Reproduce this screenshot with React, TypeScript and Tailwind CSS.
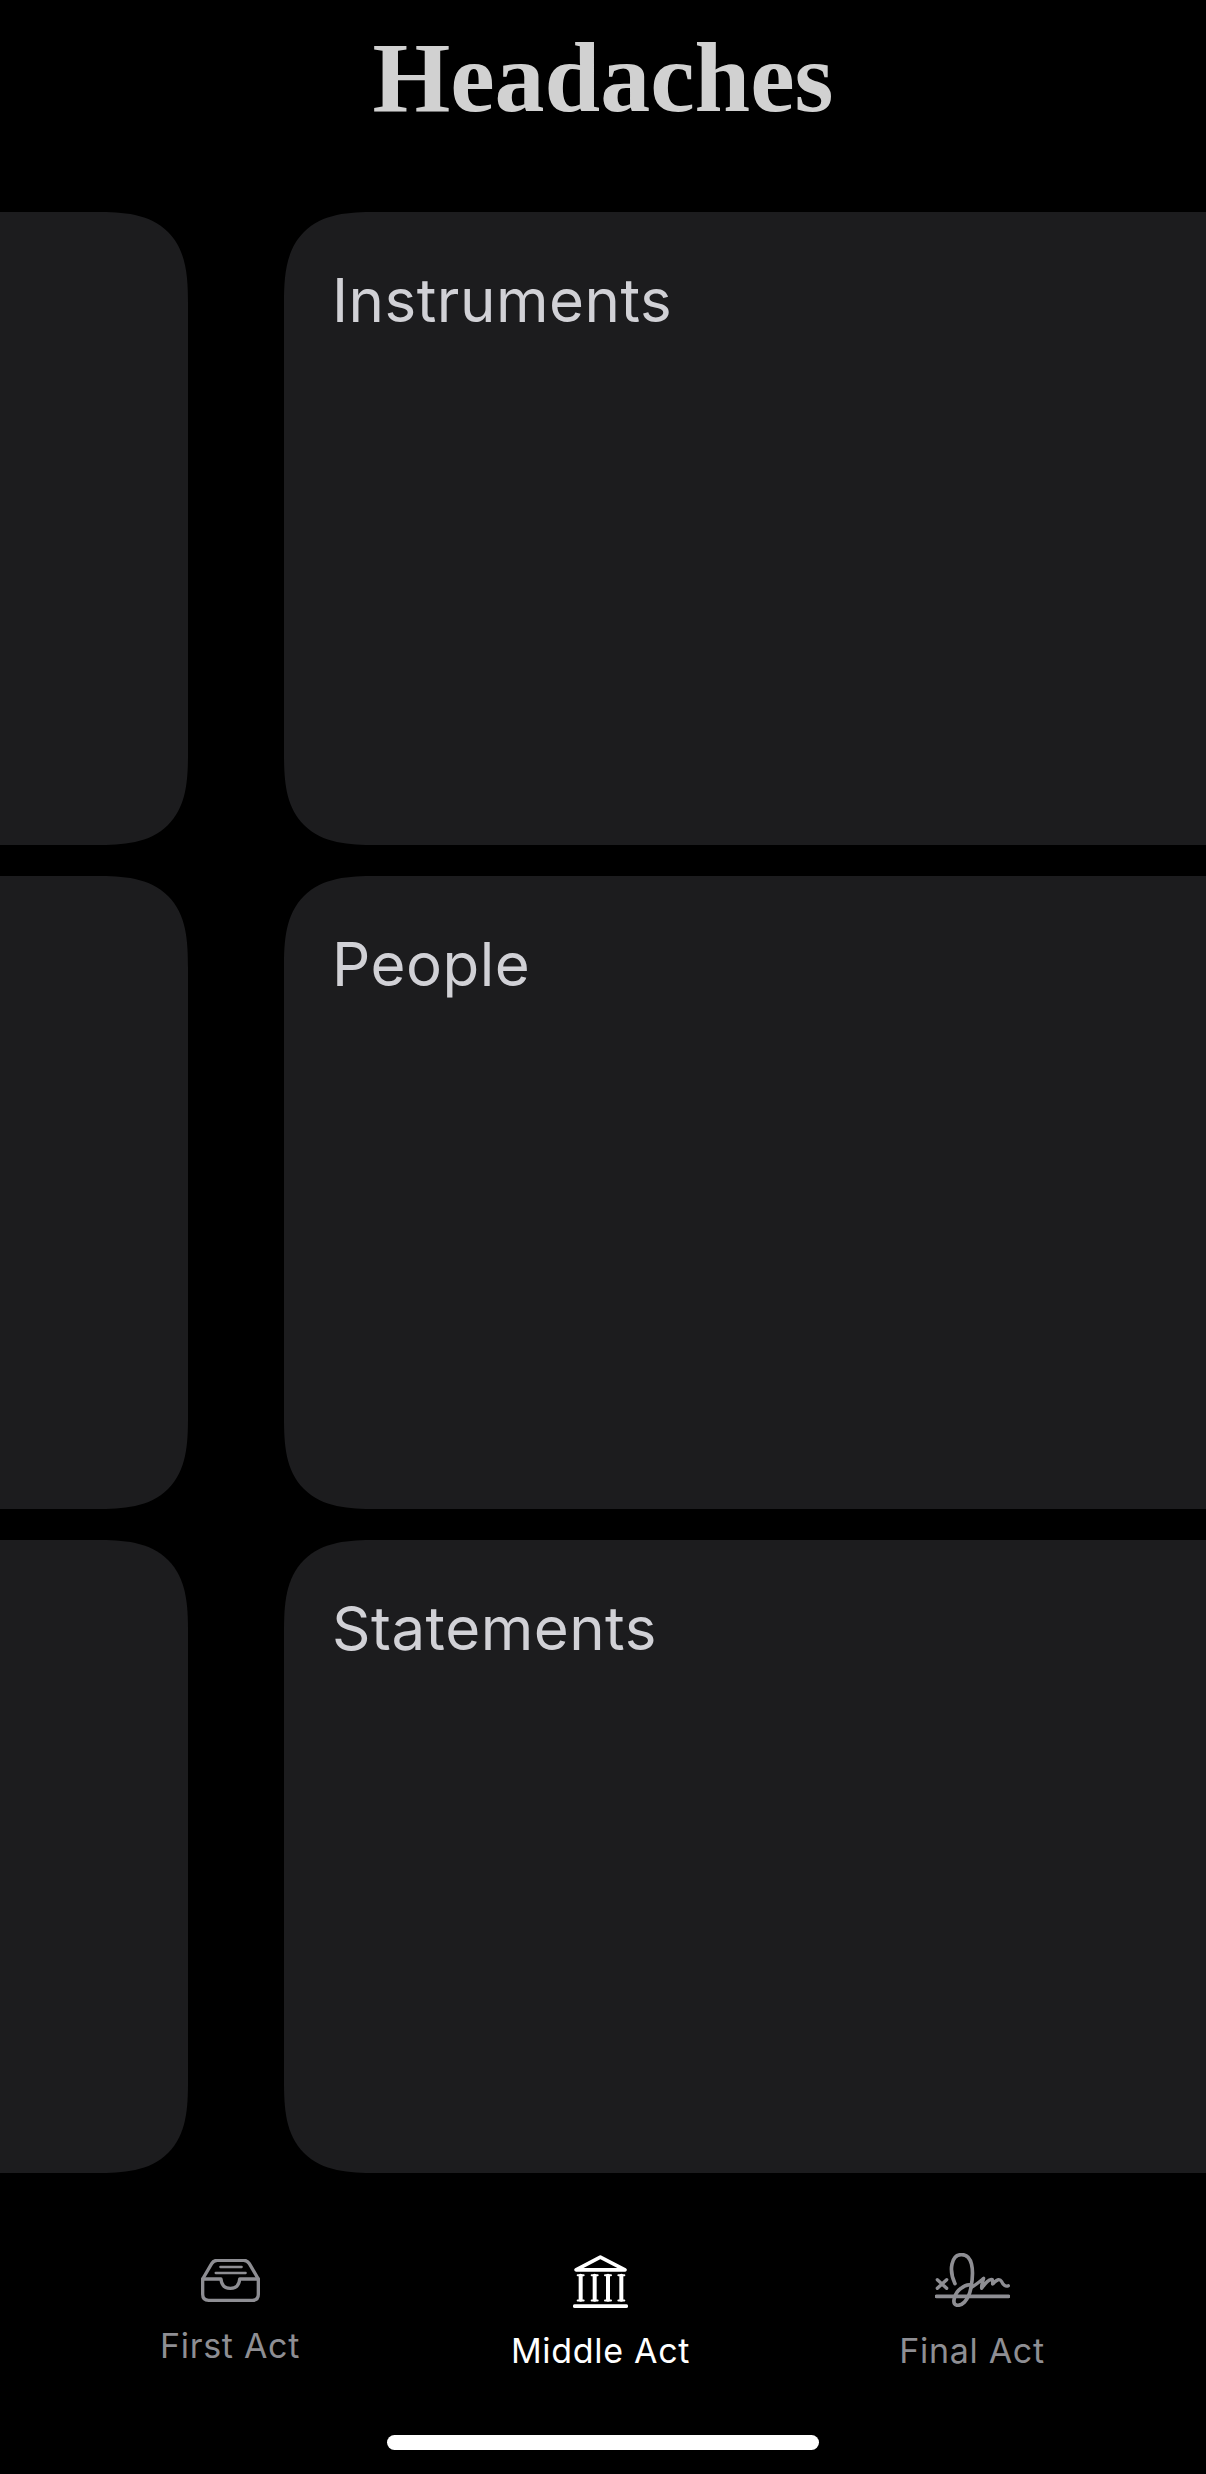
const rows = ["Instruments", "People", "Statements"];

const InboxIcon = () => (
  <svg width="59" height="43" viewBox="0 0 177 129" fill="none" stroke="#8e8e93" strokeWidth="10" strokeLinecap="round" strokeLinejoin="round">
    <path d="M5 60V106Q5 124 23 124H154Q172 124 172 106V60L145 14Q139 4 128 4H49Q38 4 32 14Z" />
    <path d="M5 60H60Q62 88 88 88Q114 88 116 60H172" />
    <path d="M58 24H122M44 42H134" strokeWidth="7" />
  </svg>
);

const BankIcon = () => (
  <svg width="55" height="53" viewBox="0 0 165 158" fill="none" stroke="#fff" strokeLinecap="round" strokeLinejoin="round">
    <path d="M9 44L82 6L156 44Z" strokeWidth="11" />
    <path d="M23 62V134M65 62V134M105 62V134M145 62V134" strokeWidth="12" />
    <path d="M14 60H32M56 60H74M96 60H114M136 60H154M14 136H32M56 136H74M96 136H114M136 136H154" strokeWidth="6" />
    <path d="M5 153H160" strokeWidth="11" />
  </svg>
);

const SignatureIcon = () => (
  <svg width="75" height="54" viewBox="0 0 225 162" fill="none" stroke="#8e8e93" strokeLinecap="round" strokeLinejoin="round">
    <path d="M7 80L35 106M35 80L7 106" strokeWidth="10" />
    <path d="M4 130H221" strokeWidth="11" />
    <path d="M60 92C40 50 50 6 78 5C112 3 118 50 108 104C100 146 78 160 64 156C50 152 58 120 78 106C88 98 100 92 112 98" strokeWidth="11" />
    <path d="M108 104C122 96 136 84 146 76C142 90 138 100 140 106C150 92 162 76 172 80C176 88 168 100 178 88C186 80 194 76 200 86C204 96 212 102 220 98" strokeWidth="10" />
  </svg>
);

function Card({ title, className }: { title?: string; className: string }) {
  return (
    <div className={`h-[633px] shrink-0 rounded-[92px] bg-[#1c1c1e] [corner-shape:superellipse(1.5)] ${className}`}>
      {title && (
        <h2 className="pt-[52px] pl-[48px] text-[60px] leading-[72px] font-[380] tracking-[0.5px] text-[#d1d1d6]">{title}</h2>
      )}
    </div>
  );
}

export default function App() {
  return (
    <div className="relative flex h-[2474px] w-[1206px] flex-col overflow-hidden bg-black font-['Inter',sans-serif]">
      <h1 className="h-[212px] pt-[22px] text-center font-['Liberation_Serif',serif] text-[100px] leading-[112px] font-bold text-[#d1d1d1]">
        Headaches
      </h1>

      <div className="flex flex-col gap-[31px]">
        {rows.map((row) => (
          <div key={row} className="-ml-[400px] flex gap-[96px]">
            <Card className="w-[588px]" />
            <Card title={row} className="w-[1100px]" />
          </div>
        ))}
      </div>

      <nav className="grid grid-cols-[370px_371px_372px] pl-[45px] text-[34px] leading-[40px] tracking-[0.7px] text-[#8e8e93]">
        <div className="flex flex-col items-center pt-[86px]">
          <InboxIcon />
          <span className="mt-[24px]">First Act</span>
        </div>
        <div className="flex flex-col items-center pt-[82px] text-white">
          <BankIcon />
          <span className="mt-[23px]">Middle Act</span>
        </div>
        <div className="flex flex-col items-center pt-[80px]">
          <SignatureIcon />
          <span className="mt-[24px]">Final Act</span>
        </div>
      </nav>

      <div className="mx-auto mt-[64px] h-[15px] w-[432px] rounded-full bg-white" />
    </div>
  );
}
